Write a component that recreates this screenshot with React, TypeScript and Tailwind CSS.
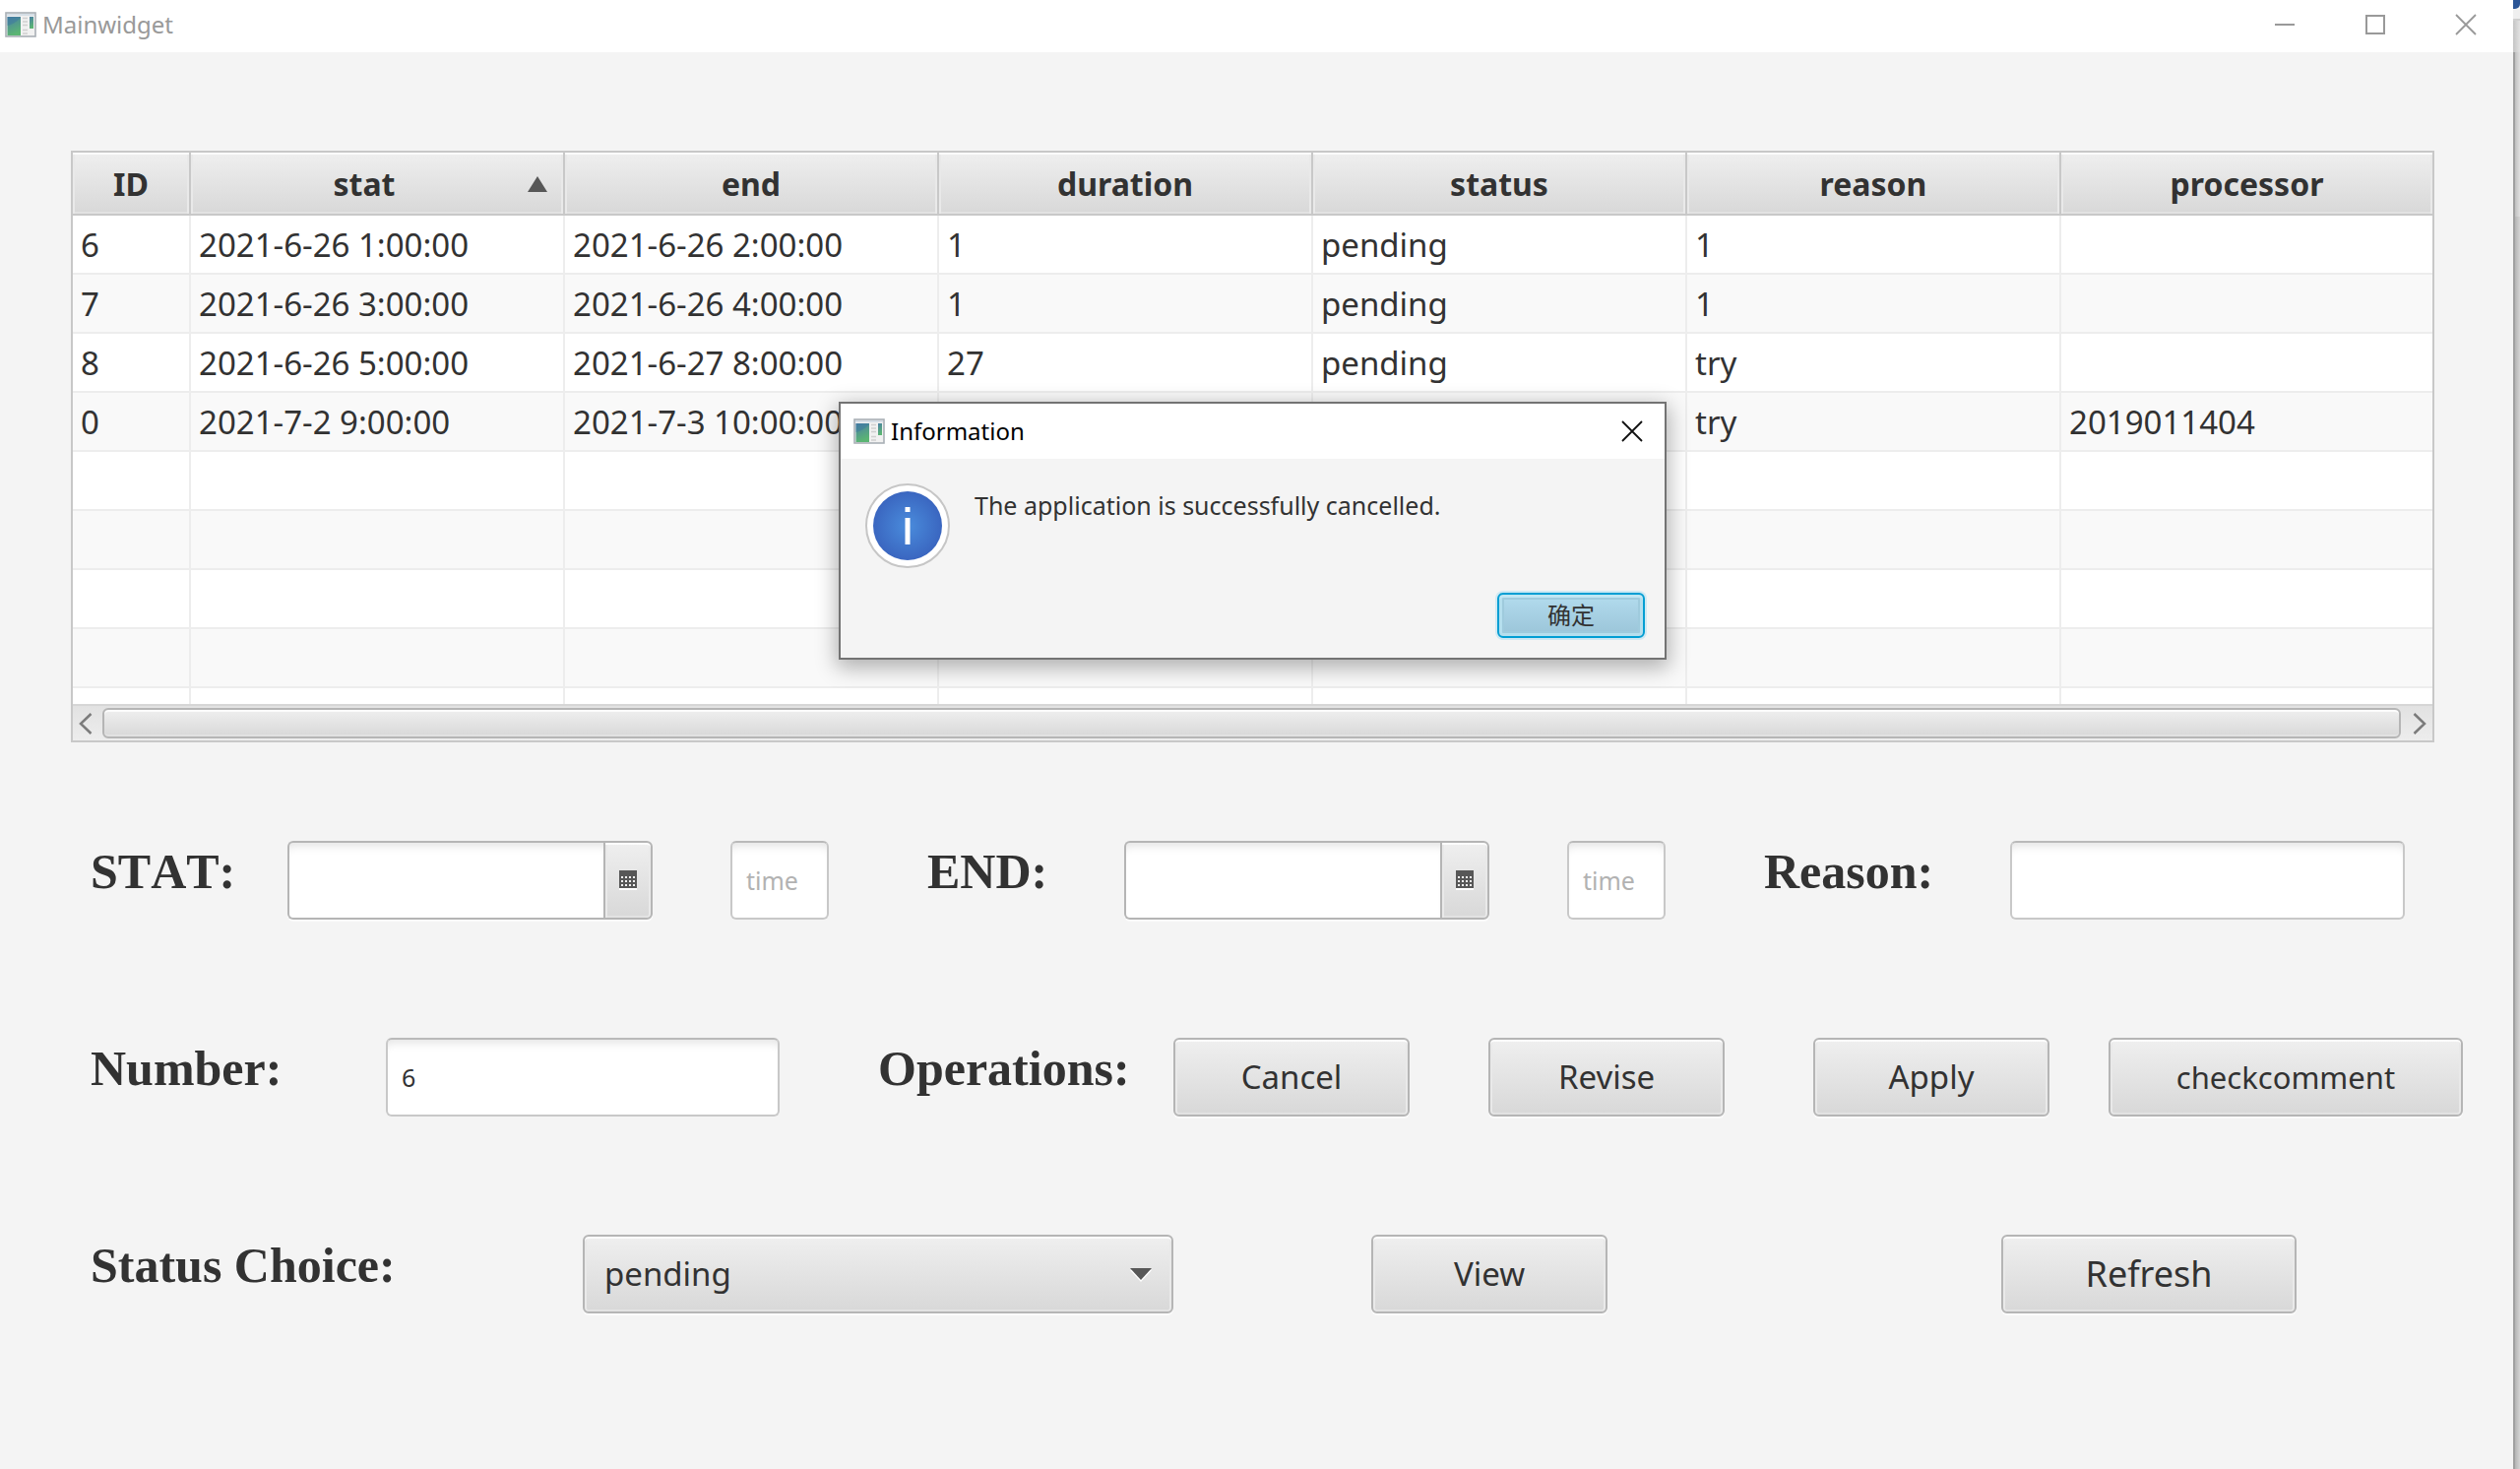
import React from "react";

const rows = [
  ["6", "2021-6-26 1:00:00", "2021-6-26 2:00:00", "1", "pending", "1", ""],
  ["7", "2021-6-26 3:00:00", "2021-6-26 4:00:00", "1", "pending", "1", ""],
  ["8", "2021-6-26 5:00:00", "2021-6-27 8:00:00", "27", "pending", "try", ""],
  ["0", "2021-7-2 9:00:00", "2021-7-3 10:00:00", "", "", "try", "2019011404"],
  ["", "", "", "", "", "", ""],
  ["", "", "", "", "", "", ""],
  ["", "", "", "", "", "", ""],
  ["", "", "", "", "", "", ""],
  ["", "", "", "", "", "", ""],
];
const columns = ["ID", "stat", "end", "duration", "status", "reason", "processor"];

const raised =
  "border-2 border-[#b5b5b5] bg-linear-to-b from-[#efefef] to-[#d8d8d8] shadow-[inset_0_2px_0_#fcfcfc,inset_2px_0_0_#e9e9e9,inset_-2px_0_0_#e9e9e9,inset_0_-2px_0_#e2e2e2,0_2px_0_#fbfbfb]";
const field =
  "h-20 min-w-0 rounded-[6px] border-2 border-[#c8c8c8] border-t-[#b9b9b9] bg-white px-3.5 text-[25px] text-[#323232] placeholder:text-[#b2b2b2] shadow-[inset_0_10px_8px_-6px_#e6e6e6] outline-none";
const caption = "shrink-0 font-['Liberation_Serif',serif] text-[50px] leading-[62px] font-bold whitespace-nowrap [font-kerning:none]";

function AppIcon() {
  return (
    <svg width="32" height="26" viewBox="0 0 32 26" className="shrink-0" aria-hidden="true">
      <defs>
        <linearGradient id="pane" x1="0" y1="0" x2="0.3" y2="1">
          <stop offset="0" stopColor="#4a7fa5" />
          <stop offset="1" stopColor="#5bb573" />
        </linearGradient>
      </defs>
      <rect x="1" y="1" width="30" height="24" fill="#f1f1f1" stroke="#a9b0b6" strokeWidth="1.6" />
      <rect x="2" y="2" width="28" height="2" fill="#d5dee6" />
      <rect x="2.5" y="5" width="13.5" height="19" fill="url(#pane)" />
      <path d="M2.500 14C7 13 12 10 16 6V5H2.500z" fill="#3b78a0" opacity="0.5" />
      <path d="M18 6.5h5M18 10h5M18 13.500h5M18 18.500h5M18 22h5" stroke="#d0d0d0" strokeWidth="1.6" />
      <rect x="25" y="5" width="4" height="12" fill="url(#pane)" />
    </svg>
  );
}

function FormLabel({ htmlFor, className, children }: { htmlFor: string; className: string; children: React.ReactNode }) {
  return (
    <label htmlFor={htmlFor} className={caption + " " + className}>
      {children}
    </label>
  );
}

function PushButton({ className, children }: { className: string; children: React.ReactNode }) {
  return (
    <button type="button" className={"h-20 shrink-0 rounded-[6px] " + raised + " " + className}>
      {children}
    </button>
  );
}

function DatePicker({ id, label }: { id: string; label: string }) {
  return (
    <div className="flex h-20 min-w-0 flex-1 rounded-[6px] shadow-[0_2px_0_#fbfbfb]">
      <input
        id={id}
        type="text"
        className="w-0 min-w-0 flex-1 rounded-l-[6px] border-2 border-r-0 border-[#b5b5b5] bg-white px-3.5 text-[25px] shadow-[inset_0_10px_8px_-6px_#e6e6e6] outline-none"
      />
      <button
        type="button"
        aria-label={label}
        className={"flex w-[50px] shrink-0 items-center justify-center rounded-r-[6px] " + raised}
      >
        <svg width="18" height="20" viewBox="0 0 18 20" aria-hidden="true">
          <rect y="18" width="18" height="2" fill="#fff" />
          <rect width="18" height="18" fill="#575757" />
          <path d="M2 7h14M2 11h14M2 15h14" stroke="#f0f0f0" strokeWidth="2" strokeDasharray="2 2" />
        </svg>
      </button>
    </div>
  );
}

function Dialog() {
  return (
    <div
      role="dialog"
      aria-labelledby="dlg-title"
      className="absolute top-[408px] left-[852px] w-[841px] border-2 border-[#737373] bg-[#f4f4f4] shadow-[0_6px_20px_2px_rgba(0,0,0,0.3)]"
    >
      <div className="flex h-14 items-center bg-white pr-[22px] pl-[13px]">
        <AppIcon />
        <h2 id="dlg-title" className="ml-1.5 flex-1 text-2xl text-black">Information</h2>
        <button type="button" aria-label="Close dialog">
          <svg width="22" height="22" viewBox="0 0 22 22" stroke="#111" strokeWidth="1.800" aria-hidden="true">
            <path d="M1 1l20 20M21 1L1 21" />
          </svg>
        </button>
      </div>
      <div className="flex gap-[25px] px-[25px] pt-[25px]">
        <svg width="86" height="86" viewBox="0 0 86 86" aria-hidden="true">
          <defs>
            <radialGradient id="info">
              <stop offset="0" stopColor="#4a8cdc" />
              <stop offset="1" stopColor="#3a66c0" />
            </radialGradient>
          </defs>
          <circle cx="43" cy="43" r="42" fill="#fff" stroke="#c6c6c6" strokeWidth="2" />
          <circle cx="43" cy="43" r="35" fill="url(#info)" />
          <rect x="40.500" y="24" width="5" height="5" fill="#fff" />
          <rect x="40.500" y="35" width="5" height="27" fill="#fff" />
        </svg>
        <p className="pt-1 text-[25px] leading-9">The application is successfully cancelled.</p>
      </div>
      <div className="flex justify-end pt-[25px] pr-5 pb-5">
        <button
          type="button"
          className="h-[46px] w-[150px] rounded-[6px] border-2 border-[#039ed3] bg-linear-to-b from-[#b3dcee] to-[#9ac4d8] text-2xl leading-none shadow-[0_0_0_2px_#cfe9f3,inset_0_3px_0_#c0e6f3,inset_0_0_0_3px_#b5dfee,inset_0_0_0_5px_#9fcbdd]"
        >
          确定
        </button>
      </div>
    </div>
  );
}

export default function App() {
  return (
    <div className="relative flex min-h-screen bg-[#f4f4f4] font-['Noto_Sans','Noto_Sans_CJK_SC',sans-serif] text-[#323232]">
      <div className="flex min-w-0 flex-1 flex-col">
        <header className="flex h-[53px] items-center bg-white pr-[37px] pb-1 pl-[5px] text-[#999]">
          <AppIcon />
          <h1 className="ml-1.5 flex-1 text-2xl">Mainwidget</h1>
          <div className="flex items-center gap-[70px]">
            <button type="button" aria-label="Minimize">
              <svg width="22" height="22" viewBox="0 0 22 22" aria-hidden="true">
                <path d="M1 11h20" stroke="#999" strokeWidth="2" />
              </svg>
            </button>
            <button type="button" aria-label="Maximize">
              <svg width="22" height="22" viewBox="0 0 22 22" aria-hidden="true">
                <rect x="2" y="2" width="18" height="18" fill="none" stroke="#999" strokeWidth="2" />
              </svg>
            </button>
            <button type="button" aria-label="Close">
              <svg width="22" height="22" viewBox="0 0 22 22" aria-hidden="true">
                <path d="M1 1l20 20M21 1L1 21" stroke="#999" strokeWidth="1.800" />
              </svg>
            </button>
          </div>
        </header>

        <main className="flex flex-1 flex-col pt-[100px] pb-20">
          <section className="mr-20 ml-[72px] border-2 border-[#c8c8c8] bg-white">
            <div className="h-[560px] overflow-hidden">
              <table className="w-full table-fixed border-separate border-spacing-0 text-left text-[33px]">
                <colgroup>
                  <col className="w-[120px]" />
                  <col className="w-[380px]" />
                  <col className="w-[380px]" />
                  <col className="w-[380px]" />
                  <col className="w-[380px]" />
                  <col className="w-[380px]" />
                  <col />
                </colgroup>
                <thead>
                  <tr>
                    {columns.map((c) => (
                      <th
                        key={c}
                        scope="col"
                        className="h-16 border-r-2 border-b-2 border-[#c8c8c8] bg-linear-to-b from-[#efefef] to-[#d8d8d8] p-0 pt-0.5 text-center text-[32px] leading-[60px] font-bold shadow-[inset_0_2px_0_#fcfcfc,inset_2px_0_0_#e9e9e9,inset_-2px_0_0_#e9e9e9,inset_0_-2px_0_#e2e2e2] last:border-r-0"
                      >
                        {c === "stat" ? (
                          <div className="flex items-center pr-4">
                            <span className="flex-1 pl-2.5">{c}</span>
                            <svg width="20" height="16" viewBox="0 0 20 16" aria-hidden="true">
                              <path d="M10 0l10 16H0z" fill="#575757" />
                            </svg>
                          </div>
                        ) : (
                          c
                        )}
                      </th>
                    ))}
                  </tr>
                </thead>
                <tbody>
                  {rows.map((r, i) => (
                    <tr key={i} className="even:bg-[#f9f9f9]">
                      {r.map((v, j) => (
                        <td
                          key={j}
                          className="h-15 overflow-hidden border-r-2 border-b-2 border-[#ededed] p-0 pt-0.5 pl-2 leading-[56px] whitespace-nowrap last:border-r-0"
                        >
                          {v}
                        </td>
                      ))}
                    </tr>
                  ))}
                </tbody>
              </table>
            </div>
            <div className="flex h-[37px] items-center border-t-2 border-[#d6d6d6] bg-linear-to-b from-[#e2e2e2] to-[#ededed] px-1.5">
              <button type="button" aria-label="Scroll left">
                <svg width="14" height="22" viewBox="0 0 14 22" fill="none" stroke="#7b7b7b" strokeWidth="2.500" aria-hidden="true">
                  <path d="M12.500 1L2 11l10.500 10" />
                </svg>
              </button>
              <div className="mr-3 ml-2.5 h-[31px] flex-1 rounded-[6px] border-2 border-[#b5b5b5] bg-linear-to-b from-[#efefef] to-[#d8d8d8] shadow-[inset_0_2px_0_#fcfcfc,inset_0_-2px_0_#e2e2e2]" />
              <button type="button" aria-label="Scroll right">
                <svg width="14" height="22" viewBox="0 0 14 22" fill="none" stroke="#7b7b7b" strokeWidth="2.500" aria-hidden="true">
                  <path d="M1.500 1L12 11L1.500 21" />
                </svg>
              </button>
            </div>
          </section>

          <form className="mt-[100px] mr-[50px] ml-[92px] flex flex-col gap-[120px] text-[33px]">
            <div className="grid grid-cols-[minmax(0,850fr)_minmax(0,850fr)_minmax(0,711fr)]">
              <div className="flex items-start pr-[100px]">
                <FormLabel htmlFor="stat-date" className="w-[200px]">STAT:</FormLabel>
                <DatePicker id="stat-date" label="Pick start date" />
                <input type="text" aria-label="Start time" placeholder="time" className={"ml-[79px] w-[100px] " + field} />
              </div>
              <div className="flex items-start pr-[100px]">
                <FormLabel htmlFor="end-date" className="w-[200px]">END:</FormLabel>
                <DatePicker id="end-date" label="Pick end date" />
                <input type="text" aria-label="End time" placeholder="time" className={"ml-[79px] w-[100px] " + field} />
              </div>
              <div className="flex items-start pr-[60px]">
                <FormLabel htmlFor="reason" className="w-[250px]">Reason:</FormLabel>
                <input id="reason" type="text" className={"flex-1 " + field} />
              </div>
            </div>

            <div className="grid grid-cols-[minmax(0,800fr)_minmax(0,1611fr)]">
              <div className="flex items-start pr-[100px]">
                <FormLabel htmlFor="number" className="w-[300px]">Number:</FormLabel>
                <input id="number" type="text" defaultValue="6" className={"flex-1 " + field} />
              </div>
              <div className="flex items-start">
                <div className={"w-[300px] " + caption}>Operations:</div>
                <PushButton className="w-[240px]">Cancel</PushButton>
                <PushButton className="ml-20 w-[240px]">Revise</PushButton>
                <PushButton className="ml-[90px] w-[240px]">Apply</PushButton>
                <PushButton className="ml-[60px] w-[360px] text-[31px]">checkcomment</PushButton>
              </div>
            </div>

            <div className="flex items-start">
              <FormLabel htmlFor="status" className="w-[500px]">Status Choice:</FormLabel>
              <div className="relative w-[600px]">
                <select id="status" defaultValue="pending" className={"h-20 w-full appearance-none rounded-[6px] pl-5 outline-none " + raised}>
                  <option>pending</option>
                </select>
                <svg width="22" height="14" viewBox="0 0 22 14" className="pointer-events-none absolute top-[34px] right-[22px]" aria-hidden="true">
                  <path d="M0 2h22L11 14z" fill="#fff" />
                  <path d="M0 0h22L11 12z" fill="#575757" />
                </svg>
              </div>
              <PushButton className="ml-[201px] w-[240px]">View</PushButton>
              <PushButton className="ml-[400px] w-[300px] text-[36px]">Refresh</PushButton>
            </div>
          </form>
        </main>
      </div>
      <div className="flex w-[7px] shrink-0 flex-col">
        <div className="h-[9px] rounded-br-[5px] bg-[#2b5596]" />
        <div className="h-2.5 bg-[#efefef]" />
        <div className="h-0.5 bg-[#cfcfcf]" />
        <div className="h-8 bg-linear-to-r from-[#c4c4c4] to-[#e2e2e2]" />
        <div className="h-[167px] border-l-2 border-[#a0a0a0] bg-linear-to-r from-[#c0c0c0] to-[#e0e0e0]" />
        <div className="flex-1 border-l-2 border-[#a0a0a0] bg-linear-to-r from-[#b4b4b4] to-[#d4d4d4]" />
      </div>
      <Dialog />
    </div>
  );
}
